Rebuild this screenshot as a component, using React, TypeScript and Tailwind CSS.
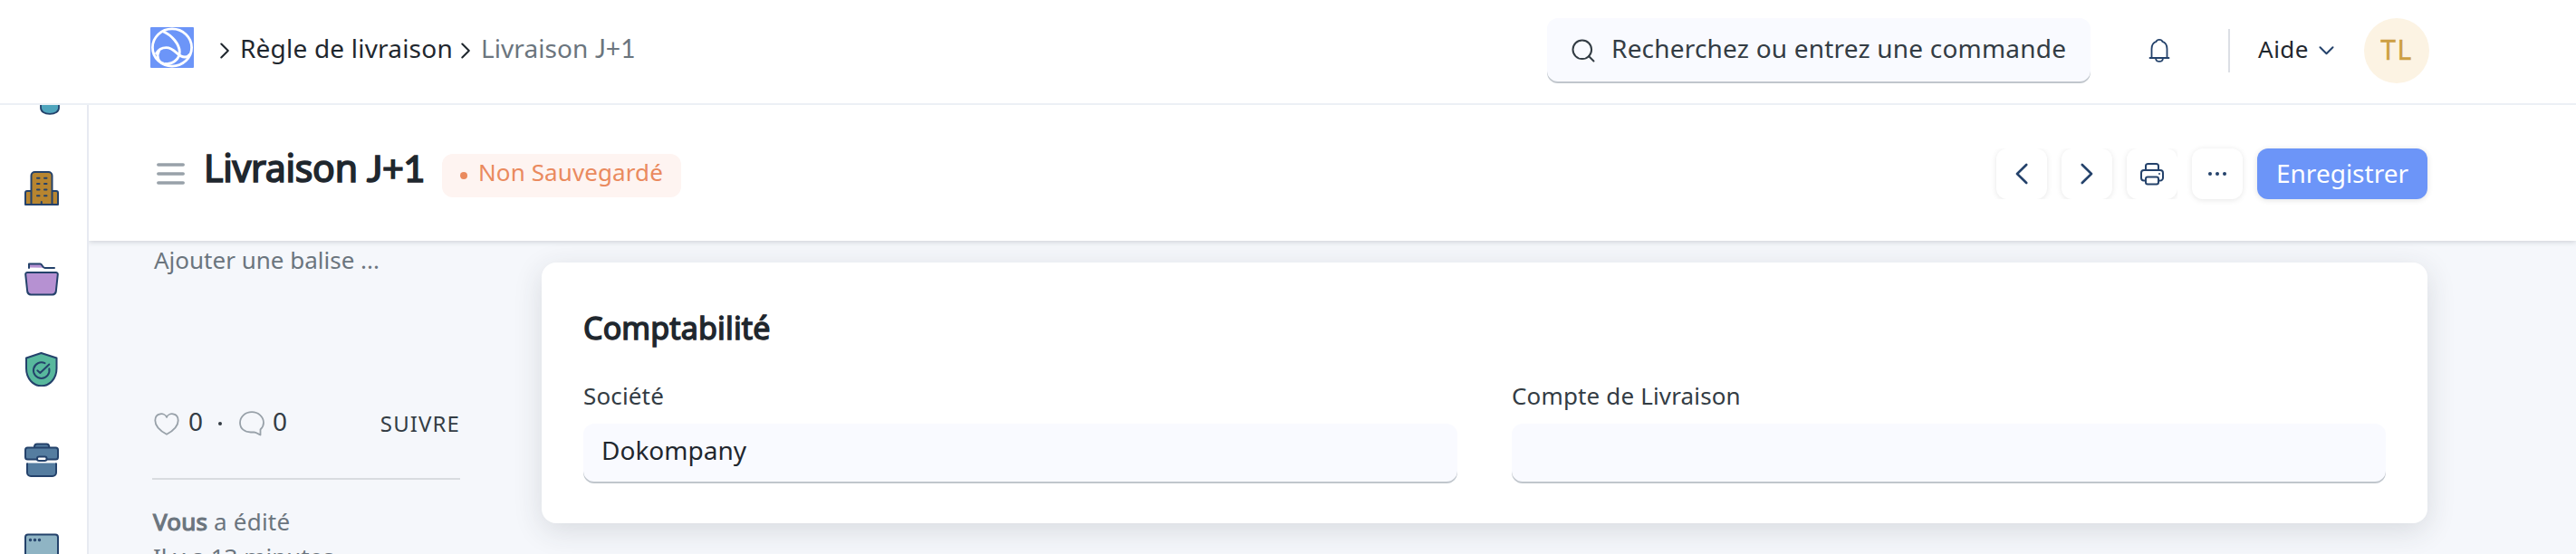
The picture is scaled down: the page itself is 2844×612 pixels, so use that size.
import type { ReactNode } from "react";

const INK = "#24426b";

function Logo() {
  return (
    <svg className="h-[45px] w-[48px]" viewBox="0 0 48 45" fill="none" stroke="#fff" strokeWidth="2.8" strokeLinecap="round">
      <rect width="48" height="45" rx="1" fill="#6c95f8" stroke="none" />
      <ellipse cx="24" cy="22.5" rx="21.6" ry="20.6" />
      <path d="M14.5 5C24 9 32 19 32.3 27C32.6 35 25 41 17 40.5" />
      <path d="M6.5 29C9 24.5 13 22.6 17.5 22.6C27.5 22.6 29.5 33 38 33C41 33 42 32 43 30.5" />
      <path d="M9.5 26.5C6.5 31.5 8.5 38.5 14.5 40.2" />
    </svg>
  );
}

function Chevron({ className }: { className: string }) {
  return (
    <svg className={className} viewBox="0 0 10 18" fill="none" stroke="currentColor" strokeWidth="2" strokeLinecap="round" strokeLinejoin="round">
      <path d="M1.3 1.5L8.8 9L1.3 16.5" />
    </svg>
  );
}

function SidebarIcon({ children }: { children: ReactNode }) {
  return (
    <div className="flex h-[100px] w-[92px] shrink-0 items-center justify-center">
      <svg className="size-[38px]" viewBox="0 0 38 38" fill="none" stroke={INK} strokeWidth="2" strokeLinecap="round" strokeLinejoin="round">
        {children}
      </svg>
    </div>
  );
}

function Sidebar() {
  return (
    <aside className="flex w-[98px] shrink-0 flex-col overflow-hidden border-r-2 border-[#e7eaf1] bg-white">
      <div className="h-[42px] shrink-0 pl-[44px]">
        <svg className="h-[11px] w-[22px]" viewBox="0 0 22 11">
          <path d="M1 -4V3C1 7.5 5 9.8 11 9.8C17 9.8 21 7.5 21 3V-4" fill="#4fa5bd" stroke={INK} strokeWidth="1.8" />
        </svg>
      </div>
      <SidebarIcon>
        <path d="M1 37V24a2 2 0 0 1 2-2H8V37ZM30 22H35a2 2 0 0 1 2 2V37H30Z" fill="#b78530" />
        <path d="M7.5 37V5a4 4 0 0 1 4-4H26.500a4 4 0 0 1 4 4V37Z" fill="#b78530" />
        <path d="M14 7.700H16.500M22 7.700H24.500M14 14H16.500M22 14H24.500M14 20.500H16.500M22 20.500H24.500M14 27.300H16.500M22 27.300H24.500M18.800 34V37" />
      </SidebarIcon>
      <SidebarIcon>
        <path d="M5 6.500V2.500H17.500C19.500 2.500 20 6.800 22 6.800" fill="#b691d2" stroke="none" />
        <path d="M5 7V2.600H17.500C20 2.600 19.500 7 22.500 7H33" />
        <path d="M3.200 12H34.800A2 2 0 0 1 36.800 14.200L34.800 33A4 4 0 0 1 31 36.400H7A4 4 0 0 1 3.200 33L1.200 14.200A2 2 0 0 1 3.200 12Z" fill="#b691d2" />
      </SidebarIcon>
      <SidebarIcon>
        <path d="M18.500 1L35.500 6.500V18C35.500 29.500 27.500 37.300 18.800 37.300C10 37.300 2 29.500 2 18V6.500Z" fill="#58b89d" />
        <path d="M22.500 12.200A8.800 8.800 0 1 0 27.300 18.200M14.300 20.300L17.300 23L27.300 13.500" />
      </SidebarIcon>
      <SidebarIcon>
        <path d="M11 6V4A3 3 0 0 1 14 1.500H24A3 3 0 0 1 27.200 4V6" fill="#557da0" />
        <rect x="1" y="5.500" width="36" height="13" rx="2.500" fill="#557da0" />
        <path d="M3 22.500H35V33A3.800 3.800 0 0 1 31.200 37H7A3.800 3.800 0 0 1 3 33Z" fill="#557da0" stroke="none" />
        <path d="M3 22.500V33A4 4 0 0 0 7 37H31A4 4 0 0 0 35 33V22.500" strokeLinecap="butt" />
        <rect x="14" y="15.500" width="10.500" height="4.500" rx="2" fill="#fff" />
      </SidebarIcon>
      <SidebarIcon>
        <rect x="1" y="1.500" width="36" height="35" rx="3" fill="#8fb4c4" />
        <circle cx="6.500" cy="7.500" r="0.700" />
        <circle cx="11.500" cy="7.500" r="0.700" />
        <circle cx="16.500" cy="7.500" r="0.700" />
      </SidebarIcon>
    </aside>
  );
}

function TopBar() {
  return (
    <header className="h-[116px] shrink-0 border-b-2 border-[#ecf0f5] bg-white">
      <div className="flex h-[112px] items-center pr-[162px] pl-[166px]">
        <div className="pb-[7px]"><Logo /></div>
        <Chevron className="ml-[29px] h-[18px] w-[10px] text-[#1f272e]" />
        <span className="ml-[12px] pb-[6px] text-[28px] tracking-[0.2px] text-[#1f272e]">Règle de livraison</span>
        <Chevron className="ml-[9px] h-[18px] w-[10px] text-[#1f272e]" />
        <span className="ml-[12px] pb-[6px] text-[28px] tracking-[0.1px] text-[#6b757e]">
          Livraison <span className="font-['Lato']">J+1</span>
        </span>
        <div className="ml-auto flex h-[72px] w-[600px] items-center rounded-[12px] bg-[#f9faff] pl-[27px] shadow-[inset_0_-2px_0_#c0c6cc]">
          <svg className="size-[26px]" viewBox="0 0 26 26" fill="none" stroke="#333c44" strokeWidth="2" strokeLinecap="round">
            <circle cx="11.800" cy="11.800" r="10.300" />
            <path d="M19 19L24.500 24.500" />
          </svg>
          <span className="ml-[18px] pb-[6px] text-[28px] tracking-[0.2px] text-[#333c44]">Recherchez ou entrez une commande</span>
        </div>
        <svg className="ml-[64px] h-[28px] w-[24px]" viewBox="0 0 24 28" fill="none" stroke={INK} strokeWidth="1.800" strokeLinecap="round" strokeLinejoin="round">
          <path d="M1.500 22H22.500M3.500 22V12C3.500 8 5.500 4.800 8.700 3.800C9.300 1.200 14.700 1.200 15.300 3.800C18.500 4.800 20.500 8 20.500 12V22M8 22.500C8.300 27 15.700 27 16 22.500" />
        </svg>
        <div className="ml-[64px] h-[48px] w-[2px] bg-[#dcdfe5]" />
        <span className="ml-[31px] pb-[4px] text-[26px] tracking-[0.5px] text-[#1f272e]">Aide</span>
        <svg className="ml-[11px] h-[10px] w-[17px]" viewBox="0 0 17 10" fill="none" stroke={INK} strokeWidth="2" strokeLinecap="round" strokeLinejoin="round">
          <path d="M1.500 1.300L8.500 8.300L15.500 1.300" />
        </svg>
        <div className="ml-[33px] flex size-[72px] items-center justify-center rounded-full bg-[#fcf3e3] pb-[3px] text-[30px] tracking-[1.500px] text-[#cd9f43] [-webkit-text-stroke:0.400px_#cd9f43]">
          TL
        </div>
      </div>
    </header>
  );
}

function IconButton({ clip, children }: { clip: string; children: ReactNode }) {
  return (
    <div className={clip}>
      <button className="flex size-[56px] items-center justify-center rounded-[12px] bg-white text-[#24426b] shadow-[0_1px_6px_rgba(0,0,0,0.1)]">
        {children}
      </button>
    </div>
  );
}

function PageHead() {
  return (
    <div className="relative z-10 flex h-[150px] shrink-0 items-start bg-white pt-[48px] pr-[164px] pl-[75px] shadow-[0_1px_6px_rgba(30,40,50,0.2)] [clip-path:inset(0_0_-12px_0)]">
      <div className="flex h-[56px] items-center">
        <svg className="h-[24px] w-[31px]" viewBox="0 0 31 24" stroke="#98a1a9" strokeWidth="3.500" strokeLinecap="round">
          <path d="M1.800 2H29.200M1.800 12H29.200M1.800 22H29.200" />
        </svg>
        <h1 className="ml-[21px] w-[246px] pb-[14px] text-[41px] leading-[44px] tracking-[-0.300px] whitespace-nowrap text-[#1f272e] [-webkit-text-stroke:1.7px_#1f272e]">
          Livraison <span className="font-['Lato']">J+1</span>
        </h1>
      </div>
      <div className="mt-[6px] ml-[17px] flex h-[48px] w-[264px] items-center rounded-[12px] bg-[#fef4f1] pl-[20px] text-[#ea8a5e]">
        <span className="size-[8px] rounded-full bg-[#ea8a5e]" />
        <span className="ml-[12px] pb-[8px] text-[26px] tracking-[0.1px]">Non Sauvegardé</span>
      </div>
      <div className="ml-auto flex gap-[16px]">
        <IconButton clip="[clip-path:inset(0_-8px)]">
          <svg className="h-[24px] w-[14px]" viewBox="0 0 14 24" fill="none" stroke="currentColor" strokeWidth="2.600" strokeLinecap="round" strokeLinejoin="round">
            <path d="M12.200 2L2 12L12.200 22" />
          </svg>
        </IconButton>
        <IconButton clip="[clip-path:inset(0_-8px)]">
          <svg className="h-[24px] w-[14px]" viewBox="0 0 14 24" fill="none" stroke="currentColor" strokeWidth="2.600" strokeLinecap="round" strokeLinejoin="round">
            <path d="M1.800 2L12 12L1.800 22" />
          </svg>
        </IconButton>
        <IconButton clip="[clip-path:inset(0_0_0_-8px)]">
          <svg className="size-[26px]" viewBox="0 0 26 26" fill="none" stroke="currentColor" strokeWidth="2" strokeLinejoin="round">
            <path d="M6 9V4A2.500 2.500 0 0 1 8.500 2H17.500A2.500 2.500 0 0 1 20 4V9" />
            <path d="M6 20.500H4A3 3 0 0 1 1 17.500V12A3 3 0 0 1 4 9H22A3 3 0 0 1 25 12V17.500A3 3 0 0 1 22 20.500H20" />
            <rect x="6" y="16.500" width="14" height="8" rx="2" />
            <circle cx="21" cy="13" r="1" fill="currentColor" stroke="none" />
          </svg>
        </IconButton>
        <IconButton clip="">
          <svg className="h-[4px] w-[20px]" viewBox="0 0 20 4" fill="currentColor">
            <circle cx="2" cy="2" r="2" />
            <circle cx="10" cy="2" r="2" />
            <circle cx="18" cy="2" r="2" />
          </svg>
        </IconButton>
        <button className="flex h-[56px] w-[188px] items-center justify-center rounded-[12px] bg-[#6c95f8] pb-[2px] text-[28px] text-white shadow-[0_1px_6px_rgba(0,0,0,0.12)]">
          Enregistrer
        </button>
      </div>
    </div>
  );
}

function SidePanel() {
  return (
    <div className="w-[340px] shrink-0 text-[26px] text-[#6b757e]">
      <div className="mt-[5px] pl-[2px] leading-[32px]">Ajouter une balise ...</div>
      <div className="mt-[145px] flex h-[40px] items-center pl-[2px] text-[#333c44]">
        <svg className="h-[26px] w-[28px]" viewBox="0 0 28 26" fill="none" stroke="#98a1a9" strokeWidth="1.800" strokeLinejoin="round">
          <path d="M14 6C12 0.500 1.300 0.500 1.300 9.500C1.300 16 7 21 14 24.800C21 21 26.700 16 26.700 9.500C26.700 0.500 16 0.500 14 6Z" />
        </svg>
        <span className="ml-[10px] pb-[6px] text-[28px] leading-[34px]">0</span>
        <span className="ml-[17px] size-[4px] rounded-full bg-[#333c44]" />
        <svg className="ml-[19px] h-[28px] w-[28px]" viewBox="0 0 28 28" fill="none" stroke="#98a1a9" strokeWidth="1.800" strokeLinejoin="round">
          <path d="M23.500 26.500V20.500C25.700 18.500 27 15.800 27 13C27 6.300 21.200 1.200 14 1.200C6.800 1.200 1 6.300 1 13C1 19.500 6 23.500 13 23.500H16.500C19 23.500 21 25.700 23.500 26.500Z" />
        </svg>
        <span className="ml-[9px] pb-[6px] text-[28px] leading-[34px]">0</span>
        <span className="ml-auto pb-[1px] text-[24px] tracking-[1.100px]">SUIVRE</span>
      </div>
      <div className="mt-[40px] h-[2px] bg-[#d9dce0]" />
      <div className="mt-[27px] pl-[1px] leading-[39px] whitespace-nowrap">
        <div className="tracking-[0.200px]">
          <span className="[-webkit-text-stroke:1.200px_#6b757e]">Vous</span> a édité
        </div>
        <div>Il y a 13 minutes</div>
      </div>
    </div>
  );
}

function Field({ label, value }: { label: string; value: string }) {
  return (
    <div className="flex-1">
      <div className="text-[26px] leading-[34px] tracking-[0.150px] text-[#333c44]">{label}</div>
      <div className="mt-[14px] flex h-[66px] items-center rounded-[12px] bg-[#f9faff] pb-[8px] pl-[20px] text-[28px] text-[#1f272e] shadow-[inset_0_-2px_0_#c0c6cc]">
        {value}
      </div>
    </div>
  );
}

export default function App() {
  return (
    <div className="flex h-[612px] w-[2844px] flex-col overflow-hidden bg-white font-['Noto_Sans',sans-serif]">
      <TopBar />
      <div className="flex min-h-0 flex-1">
        <Sidebar />
        <main className="flex min-w-0 flex-1 flex-col bg-[#f5f7fb]">
          <PageHead />
          <div className="flex min-h-0 flex-1 overflow-hidden pr-[164px] pl-[70px]">
            <SidePanel />
            <section className="mt-[24px] ml-[90px] h-[288px] flex-1 rounded-[16px] bg-white px-[46px] pt-[51px] shadow-[0_8px_32px_rgba(40,50,60,0.14)]">
              <h2 className="text-[34px] leading-[42px] tracking-[0.150px] text-[#1f272e] [-webkit-text-stroke:1.500px_#1f272e]">Comptabilité</h2>
              <div className="mt-[37px] flex gap-[60px]">
                <Field label="Société" value="Dokompany" />
                <Field label="Compte de Livraison" value="" />
              </div>
            </section>
          </div>
        </main>
      </div>
    </div>
  );
}
